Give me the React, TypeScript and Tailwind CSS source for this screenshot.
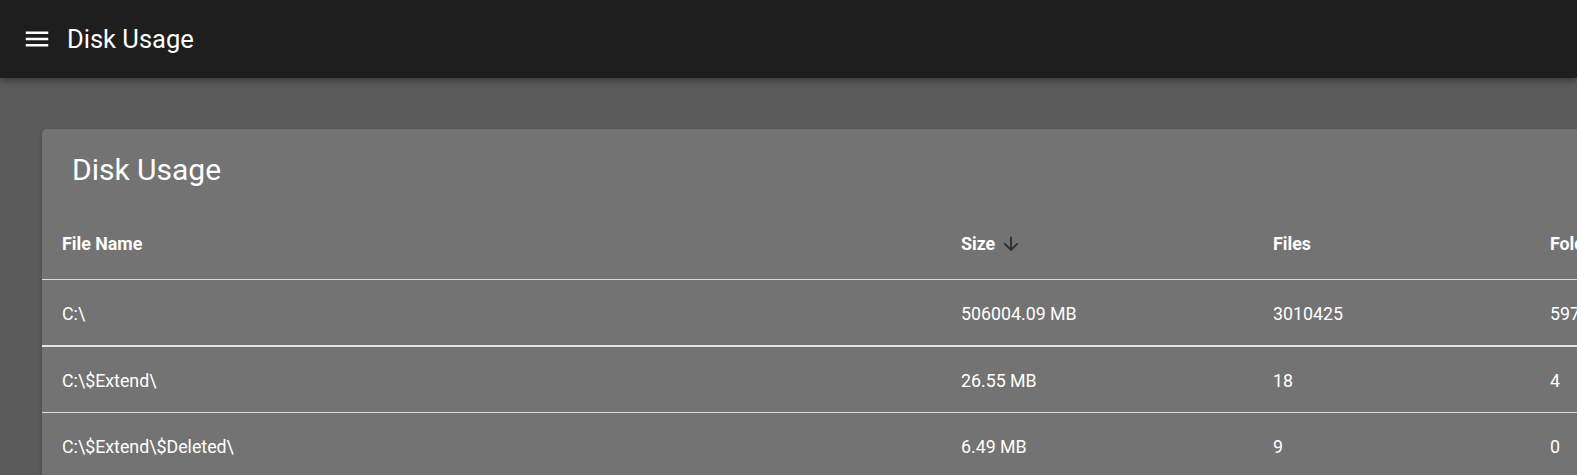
import React from 'react'

type Row = { name: string; size: string; files: string; folders: string }

const rows: Row[] = [
  { name: 'C:\\', size: '506004.09 MB', files: '3010425', folders: '597' },
  { name: 'C:\\$Extend\\', size: '26.55 MB', files: '18', folders: '4' },
  { name: 'C:\\$Extend\\$Deleted\\', size: '6.49 MB', files: '9', folders: '0' },
]

function MenuIcon() {
  return (
    <svg width="30" height="30" viewBox="0 0 24 24" fill="white">
      <path d="M3 18h18v-2H3v2zm0-5h18v-2H3v2zm0-7v2h18V6H3z" />
    </svg>
  )
}

function ArrowDown() {
  return (
    <svg width="22" height="22" viewBox="0 0 24 24" fill="#2e2e2e">
      <path d="M20 12l-1.41-1.41L13 16.17V4h-2v12.17l-5.58-5.59L4 12l8 8 8-8z" />
    </svg>
  )
}

function App() {
  return (
    <div className="h-[475px] w-[1577px] overflow-hidden bg-[#5b5b5b] font-['Roboto',sans-serif] text-white">
      <header className="relative z-10 flex h-[78px] items-center bg-[#1e1e1e] pl-[22px] shadow-[0_3px_6px_rgba(0,0,0,0.35)]">
        <MenuIcon />
        <h1 className="ml-[15px] pt-[2px] text-[25.5px] font-normal leading-none">Disk Usage</h1>
      </header>

      <main className="pl-[42px] pt-[51px]">
        <section className="w-[1700px] rounded-t-[5px] bg-[#737373] shadow-[0_2px_4px_rgba(0,0,0,0.2)]">
          <h2 className="h-[80px] pl-[30px] pt-[25px] text-[30px] font-normal leading-[32px]">Disk Usage</h2>

          <div className="flex h-[71px] items-center border-b border-[#dcdcdc] text-[17.8px] font-bold">
            <div className="w-[899px] pl-5">File Name</div>
            <div className="flex w-[312px] items-center gap-[5px] pl-5">
              Size <ArrowDown />
            </div>
            <div className="w-[277px] pl-5">Files</div>
            <div className="pl-5">Folders</div>
          </div>

          {rows.map((r, i) => (
            <div
              key={r.name}
              className={
                i === 0
                  ? 'flex h-[67px] items-center border-b-2 border-[#e6e6e6] pt-[3px] text-[17.8px]'
                  : i === 1
                    ? 'flex h-[66px] items-center border-b border-[#dcdcdc] pt-[3px] text-[17.8px]'
                    : 'flex h-[66px] items-center pt-[3px] text-[17.8px]'
              }
            >
              <div className="w-[899px] pl-5">{r.name}</div>
              <div className="w-[312px] pl-5">{r.size}</div>
              <div className="w-[277px] pl-5">{r.files}</div>
              <div className="pl-5">{r.folders}</div>
            </div>
          ))}
        </section>
      </main>
    </div>
  )
}

export default App
